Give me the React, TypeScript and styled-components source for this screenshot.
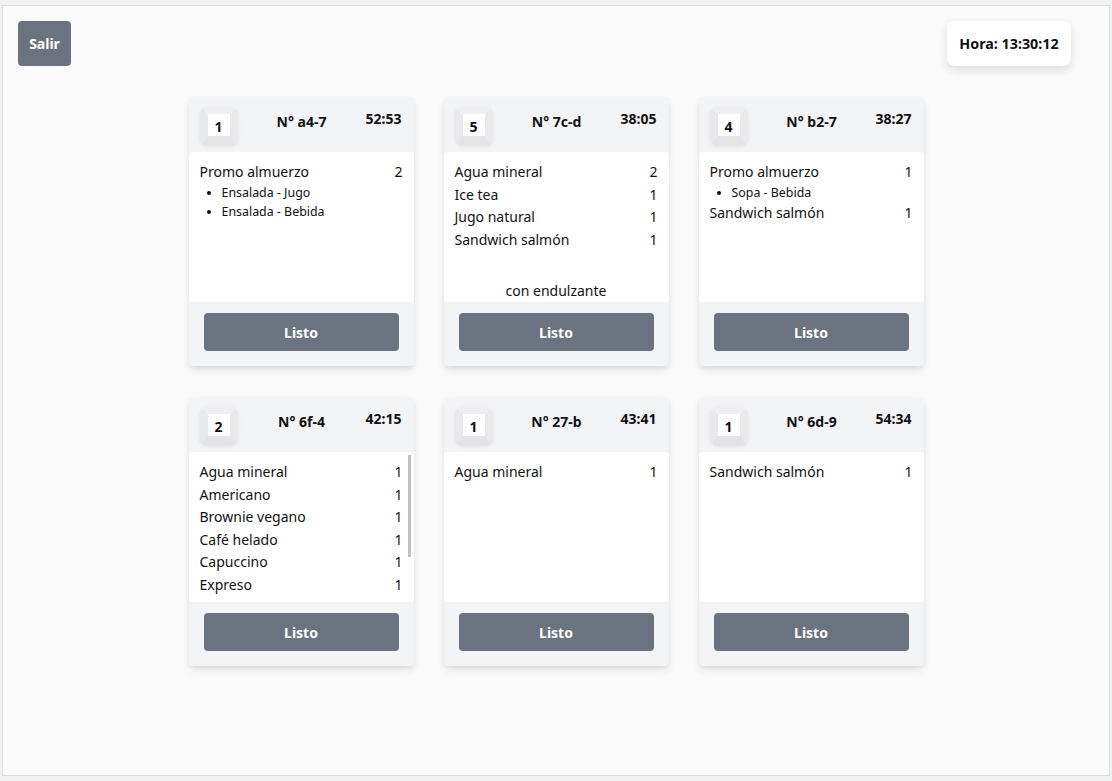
import React from "react";
import styled, { createGlobalStyle } from "styled-components";

const Global = createGlobalStyle`
  html, body { margin: 0; padding: 0; background: #f1f2f2; }
  body { font-family: "Noto Sans", "Open Sans", sans-serif; color: #111; }
  * { box-sizing: border-box; }
`;

const Frame = styled.div`
  margin: 5px 2px 5px 2px;
  height: 771px;
  border: 1px solid #dddddd;
  background: #fafafa;
  padding: 15px 38px 0 15px;
`;

const TopBar = styled.div`
  display: flex;
  justify-content: space-between;
  align-items: flex-start;
`;

const ExitButton = styled.button`
  width: 53px;
  height: 45px;
  border: none;
  border-radius: 4px;
  background: #6b7280;
  color: #fff;
  font-family: inherit;
  font-weight: 700;
  font-size: 14px;
  cursor: pointer;
`;

const Clock = styled.div`
  width: 124px;
  height: 45px;
  background: #fff;
  border-radius: 8px;
  box-shadow: 0 4px 10px rgba(0, 0, 0, 0.12);
  display: flex;
  align-items: center;
  justify-content: center;
  font-weight: 700;
  font-size: 14.3px;
`;

const Grid = styled.div`
  display: grid;
  grid-template-columns: repeat(3, 225px);
  column-gap: 30px;
  row-gap: 31px;
  justify-content: center;
  margin-top: 31px;
  margin-left: 23px;
`;

const Card = styled.div`
  width: 225px;
  height: 269px;
  background: #f3f4f6;
  border-radius: 4px;
  box-shadow: 0 4px 8px -1px rgba(0, 0, 0, 0.12), 0 2px 4px -1px rgba(0, 0, 0, 0.06);
  display: flex;
  flex-direction: column;
`;

const CardHeader = styled.div`
  height: 55px;
  display: flex;
  align-items: flex-start;
  padding: 10px 12px 0 11px;
`;

const Keycap = styled.div`
  width: 38px;
  height: 39px;
  border-style: solid;
  border-width: 7px 8px 10px 8px;
  border-color: #efeff1 #e9e9eb #e4e4e6 #e9e9eb;
  border-radius: 8px;
  background: #ffffff;
  box-shadow: 0 1px 4px rgba(0, 0, 0, 0.07);
  display: flex;
  align-items: center;
  justify-content: center;
  font-weight: 700;
  font-size: 14px;
  padding-top: 2px;
`;

const OrderNo = styled.div`
  flex: 1;
  text-align: center;
  font-weight: 700;
  font-size: 14px;
  margin-top: 5px;
`;

const Elapsed = styled.div`
  font-weight: 700;
  font-size: 14px;
  margin-top: 2px;
`;

const BodyWrap = styled.div`
  position: relative;
  height: 150px;
  background: #fff;
  border-radius: 4px;
  overflow: hidden;
`;

const CardBody = styled.div`
  height: 100%;
  padding: 9px 11px 0 11px;
  overflow-y: auto;
  display: flex;
  flex-direction: column;
  scrollbar-width: none;
  &::-webkit-scrollbar { display: none; }
`;

const ScrollThumb = styled.div`
  position: absolute;
  top: 3px;
  right: 3px;
  width: 3px;
  height: 102px;
  background: #c1c1c1;
`;

const ItemRow = styled.div`
  display: flex;
  justify-content: space-between;
  font-size: 14px;
  line-height: 22.5px;
  flex-shrink: 0;
`;

const SubList = styled.ul`
  margin: -1px 0 0 0;
  padding-left: 22px;
  font-size: 12.4px;
  line-height: 19px;
  flex-shrink: 0;
`;

const Note = styled.div`
  margin-top: auto;
  text-align: center;
  font-size: 14px;
  line-height: 22px;
  flex-shrink: 0;
`;

const CardFooter = styled.div`
  flex: 1;
  display: flex;
  align-items: flex-start;
  justify-content: center;
  padding-top: 11px;
`;

const DoneButton = styled.button`
  width: 195px;
  height: 38px;
  border: none;
  border-radius: 4px;
  background: #6b7280;
  color: #fff;
  font-family: inherit;
  font-weight: 700;
  font-size: 14px;
  cursor: pointer;
`;

type Item = { name: string; qty: number; subs?: string[] };
type Order = { table: number; code: string; time: string; items: Item[]; note?: string };

const orders: Order[] = [
  {
    table: 1,
    code: "a4-7",
    time: "52:53",
    items: [{ name: "Promo almuerzo", qty: 2, subs: ["Ensalada - Jugo", "Ensalada - Bebida"] }],
  },
  {
    table: 5,
    code: "7c-d",
    time: "38:05",
    items: [
      { name: "Agua mineral", qty: 2 },
      { name: "Ice tea", qty: 1 },
      { name: "Jugo natural", qty: 1 },
      { name: "Sandwich salmón", qty: 1 },
    ],
    note: "con endulzante",
  },
  {
    table: 4,
    code: "b2-7",
    time: "38:27",
    items: [
      { name: "Promo almuerzo", qty: 1, subs: ["Sopa - Bebida"] },
      { name: "Sandwich salmón", qty: 1 },
    ],
  },
  {
    table: 2,
    code: "6f-4",
    time: "42:15",
    items: [
      { name: "Agua mineral", qty: 1 },
      { name: "Americano", qty: 1 },
      { name: "Brownie vegano", qty: 1 },
      { name: "Café helado", qty: 1 },
      { name: "Capuccino", qty: 1 },
      { name: "Expreso", qty: 1 },
      { name: "Latte", qty: 1 },
      { name: "Muffin", qty: 1 },
      { name: "Té verde", qty: 1 },
    ],
  },
  {
    table: 1,
    code: "27-b",
    time: "43:41",
    items: [{ name: "Agua mineral", qty: 1 }],
  },
  {
    table: 1,
    code: "6d-9",
    time: "54:34",
    items: [{ name: "Sandwich salmón", qty: 1 }],
  },
];

export default function App() {
  return (
    <>
      <Global />
      <Frame>
        <TopBar>
          <ExitButton>Salir</ExitButton>
          <Clock>Hora: 13:30:12</Clock>
        </TopBar>
        <Grid>
          {orders.map((o, i) => (
            <Card key={i}>
              <CardHeader>
                <Keycap>{o.table}</Keycap>
                <OrderNo>N° {o.code}</OrderNo>
                <Elapsed>{o.time}</Elapsed>
              </CardHeader>
              <BodyWrap>
                <CardBody>
                  {o.items.map((it, j) => (
                    <React.Fragment key={j}>
                      <ItemRow>
                        <span>{it.name}</span>
                        <span>{it.qty}</span>
                      </ItemRow>
                      {it.subs && (
                        <SubList>
                          {it.subs.map((s, k) => (
                            <li key={k}>{s}</li>
                          ))}
                        </SubList>
                      )}
                    </React.Fragment>
                  ))}
                  {o.note && <Note>{o.note}</Note>}
                </CardBody>
                {o.items.length > 6 && <ScrollThumb />}
              </BodyWrap>
              <CardFooter>
                <DoneButton>Listo</DoneButton>
              </CardFooter>
            </Card>
          ))}
        </Grid>
      </Frame>
    </>
  );
}
